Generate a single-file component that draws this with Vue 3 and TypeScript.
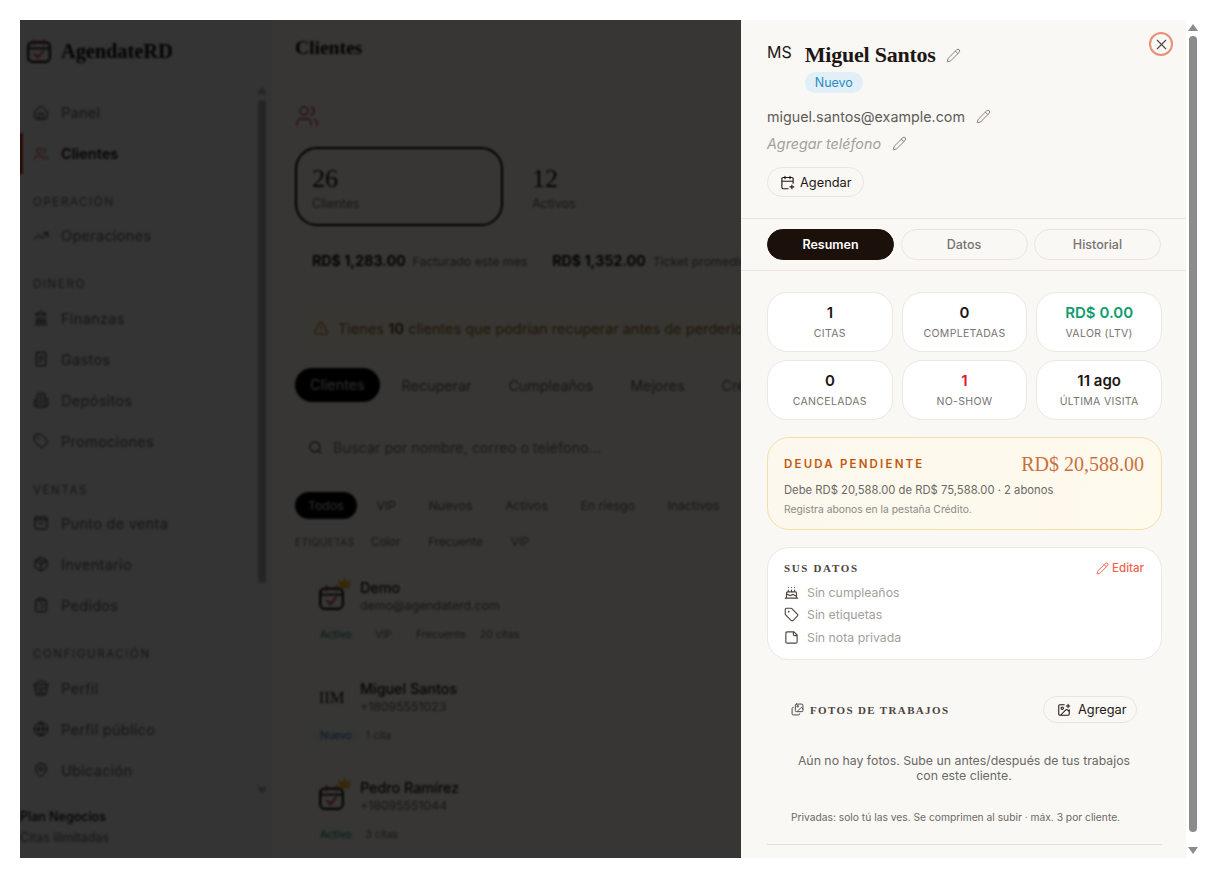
<script setup lang="ts">
  // iconos dibujados a mano, un solo path por icono
  const ICONS: Record<string, string> = {
    house: 'M15 21v-8a1 1 0 0 0-1-1h-4a1 1 0 0 0-1 1v8M3 10a2 2 0 0 1 .709-1.528l7-5.999a2 2 0 0 1 2.582 0l7 5.999A2 2 0 0 1 21 10v9a2 2 0 0 1-2 2H5a2 2 0 0 1-2-2z',
    users: 'M16 21v-2a4 4 0 0 0-4-4H6a4 4 0 0 0-4 4v2M5 7a4 4 0 1 0 8 0a4 4 0 1 0-8 0M22 21v-2a4 4 0 0 0-3-3.87M16 3.13a4 4 0 0 1 0 7.75',
    trend: 'M22 7l-8.5 8.5-5-5L2 17M16 7h6v6',
    bank: 'M3 22h18M6 18v-7M10 18v-7M14 18v-7M18 18v-7M12 2l8 5H4zM4 18h16',
    receipt: 'M6 2h12a1 1 0 0 1 1 1v18a1 1 0 0 1-1 1H6a1 1 0 0 1-1-1V3a1 1 0 0 1 1-1zM9 8h6M9 12h6M9 16h3',
    building: 'M6 22V4a2 2 0 0 1 2-2h8a2 2 0 0 1 2 2v18ZM6 12H4a2 2 0 0 0-2 2v6a2 2 0 0 0 2 2h2M18 9h2a2 2 0 0 1 2 2v9a2 2 0 0 1-2 2h-2M10 6h4M10 10h4M10 14h4M10 18h4',
    tag: 'M12.586 2.586A2 2 0 0 0 11.172 2H4a2 2 0 0 0-2 2v7.172a2 2 0 0 0 .586 1.414l8.704 8.704a2.426 2.426 0 0 0 3.42 0l6.58-6.58a2.426 2.426 0 0 0 0-3.42zM7 7.5a.5.5 0 1 0 1 0a.5.5 0 1 0-1 0',
    bag: 'M5 3h14a2 2 0 0 1 2 2v14a2 2 0 0 1-2 2H5a2 2 0 0 1-2-2V5a2 2 0 0 1 2-2zM3 7h18M8.5 11l3.5 3 3.5-3',
    box: 'M7.5 4.27l9 5.15M21 8a2 2 0 0 0-1-1.73l-7-4a2 2 0 0 0-2 0l-7 4A2 2 0 0 0 3 8v8a2 2 0 0 0 1 1.73l7 4a2 2 0 0 0 2 0l7-4A2 2 0 0 0 21 16ZM3.3 7l8.7 5 8.7-5M12 22V12',
    clipboard: 'M9 2h6a1 1 0 0 1 1 1v2a1 1 0 0 1-1 1H9a1 1 0 0 1-1-1V3a1 1 0 0 1 1-1zM16 4h2a2 2 0 0 1 2 2v14a2 2 0 0 1-2 2H6a2 2 0 0 1-2-2V6a2 2 0 0 1 2-2h2M12 11h4M12 16h4M8 11h.01M8 16h.01',
    store: 'M2 7l4.41-4.41A2 2 0 0 1 7.83 2h8.34a2 2 0 0 1 1.42.59L22 7M4 12v8a2 2 0 0 0 2 2h12a2 2 0 0 0 2-2v-8M15 22v-4a2 2 0 0 0-2-2h-2a2 2 0 0 0-2 2v4M2 7h20M22 7v3a2 2 0 0 1-2 2a2.7 2.7 0 0 1-2-1a2.7 2.7 0 0 1-4 1a2.7 2.7 0 0 1-4 0a2.7 2.7 0 0 1-4-1a2.7 2.7 0 0 1-2 1a2 2 0 0 1-2-2V7',
    globe: 'M2 12a10 10 0 1 0 20 0a10 10 0 1 0-20 0M12 2a14.5 14.5 0 0 0 0 20 14.5 14.5 0 0 0 0-20M2 12h20',
    pin: 'M20 10c0 4.993-5.539 10.193-7.399 11.799a1 1 0 0 1-1.202 0C9.539 20.193 4 14.993 4 10a8 8 0 0 1 16 0M9 10a3 3 0 1 0 6 0a3 3 0 1 0-6 0',
    search: 'M3 11a8 8 0 1 0 16 0a8 8 0 1 0-16 0M21 21l-4.3-4.3',
    alert: 'M21.73 18l-8-14a2 2 0 0 0-3.48 0l-8 14A2 2 0 0 0 4 21h16a2 2 0 0 0 1.73-3M12 9v4M12 17h.01',
    pencil: 'M21.174 6.812a1 1 0 0 0-3.986-3.987L3.842 16.174a2 2 0 0 0-.5.83l-1.321 4.352a.5.5 0 0 0 .623.622l4.353-1.32a2 2 0 0 0 .83-.497zM15 5l4 4',
    close: 'M18 6L6 18M6 6l12 12',
    calPlus: 'M16 2v4M8 2v4M21 13V6a2 2 0 0 0-2-2H5a2 2 0 0 0-2 2v14a2 2 0 0 0 2 2h8M3 10h18M16 19h6M19 16v6',
    cake: 'M20 21v-8a2 2 0 0 0-2-2H6a2 2 0 0 0-2 2v8M4 16s.5-1 2-1 2.5 2 4 2 2.5-2 4-2 2.5 2 4 2 2-1 2-1M2 21h20M7 8v3M12 8v3M17 8v3M7 4h.01M12 4h.01M17 4h.01',
    note: 'M16 3H5a2 2 0 0 0-2 2v14a2 2 0 0 0 2 2h14a2 2 0 0 0 2-2V8ZM15 3v4a2 2 0 0 0 2 2h4',
    images: 'M10 2h10a2 2 0 0 1 2 2v10a2 2 0 0 1-2 2H10a2 2 0 0 1-2-2V4a2 2 0 0 1 2-2zM4 8a2 2 0 0 0-2 2v10a2 2 0 0 0 2 2h10a2 2 0 0 0 2-2M22 11l-3-3-6 6M11 6a1.5 1.5 0 1 0 3 0a1.5 1.5 0 1 0-3 0',
    imagePlus: 'M16 5h6M19 2v6M21 11.5V19a2 2 0 0 1-2 2H5a2 2 0 0 1-2-2V5a2 2 0 0 1 2-2h7.5M21 15l-3.086-3.086a2 2 0 0 0-2.828 0L6 21M7 9a2 2 0 1 0 4 0a2 2 0 1 0-4 0',
  }

  interface NavGroup {
    label?: string
    items: { icon: string; text: string; active?: boolean }[]
  }

  const navGroups: NavGroup[] = [
    { items: [{ icon: 'house', text: 'Panel' }, { icon: 'users', text: 'Clientes', active: true }] },
    { label: 'OPERACIÓN', items: [{ icon: 'trend', text: 'Operaciones' }] },
    {
      label: 'DINERO',
      items: [
        { icon: 'bank', text: 'Finanzas' },
        { icon: 'receipt', text: 'Gastos' },
        { icon: 'building', text: 'Depósitos' },
        { icon: 'tag', text: 'Promociones' },
      ],
    },
    {
      label: 'VENTAS',
      items: [
        { icon: 'bag', text: 'Punto de venta' },
        { icon: 'box', text: 'Inventario' },
        { icon: 'clipboard', text: 'Pedidos' },
      ],
    },
    {
      label: 'CONFIGURACIÓN',
      items: [
        { icon: 'store', text: 'Perfil' },
        { icon: 'globe', text: 'Perfil público' },
        { icon: 'pin', text: 'Ubicación' },
      ],
    },
  ]

  const tabs = ['Recuperar', 'Cumpleaños', 'Mejores', 'Crédito']
  const chips = ['VIP', 'Nuevos', 'Activos', 'En riesgo', 'Inactivos']
  const tagFilters = ['Color', 'Frecuente', 'VIP']

  const clients = [
    { name: 'Demo', sub: 'demo@agendaterd.com', logo: true, status: 'Activo', tone: 'green', tags: ['VIP', 'Frecuente'], count: '20 citas' },
    { name: 'Miguel Santos', sub: '+18095551023', logo: false, status: 'Nuevo', tone: 'blue', tags: [], count: '1 cita' },
    { name: 'Pedro Ramírez', sub: '+18095551044', logo: true, status: 'Activo', tone: 'green', tags: [], count: '3 citas' },
  ]

  const stats = [
    { value: '1', label: 'Citas', tone: '' },
    { value: '0', label: 'Completadas', tone: '' },
    { value: 'RD$ 0.00', label: 'Valor (LTV)', tone: 'green' },
    { value: '0', label: 'Canceladas', tone: '' },
    { value: '1', label: 'No-show', tone: 'red' },
    { value: '11 ago', label: 'Última visita', tone: '' },
  ]

  const detailTabs = ['Resumen', 'Datos', 'Historial']

  const dataRows = [
    { icon: 'cake', text: 'Sin cumpleaños' },
    { icon: 'tag', text: 'Sin etiquetas' },
    { icon: 'note', text: 'Sin nota privada' },
  ]
</script>

<template>
  <div class="page">
    <div class="frame">
      <aside class="sidebar">
        <div class="brand">
          <svg class="logo" viewBox="0 0 24 24" fill="none" stroke-linecap="round" stroke-linejoin="round">
            <rect x="2" y="4" width="20" height="18" rx="4" stroke="#111" stroke-width="2" />
            <path d="M2.5 9.5h19" stroke="#111" stroke-width="1.6" />
            <path d="M7.5 2v4M16.5 2v4" stroke="#c0392b" stroke-width="1.6" />
            <path d="M8 15l3 3 5-6" stroke="#c0392b" stroke-width="1.8" />
          </svg>
          <span class="brand-name">AgendateRD</span>
        </div>
        <div class="side-scroll">
          <nav class="nav">
            <template v-for="group in navGroups" :key="group.label ?? 'top'">
              <div v-if="group.label" class="nav-label">{{ group.label }}</div>
              <a
                v-for="item in group.items"
                :key="item.text"
                class="nav-item"
                :class="{ active: item.active }"
              >
                <svg class="ico nav-ico" viewBox="0 0 24 24"><path :d="ICONS[item.icon]" /></svg>
                <span>{{ item.text }}</span>
              </a>
            </template>
          </nav>
          <div class="side-bar">
            <i class="arrow up" />
            <i class="thumb" />
            <i class="arrow down" />
          </div>
        </div>
        <div class="plan">
          <strong>Plan Negocios</strong>
          <span>Citas ilimitadas</span>
        </div>
      </aside>

      <main class="main">
        <h1 class="title">Clientes</h1>
        <svg class="ico head-ico" viewBox="0 0 24 24"><path :d="ICONS.users" /></svg>
        <div class="cards">
          <div class="card selected">
            <b>26</b>
            <span>Clientes</span>
          </div>
          <div class="card">
            <b>12</b>
            <span>Activos</span>
          </div>
        </div>
        <div class="kpis">
          <strong>RD$ 1,283.00</strong><span>Facturado este mes</span>
          <strong class="kpi-second">RD$ 1,352.00</strong><span>Ticket promedio</span>
        </div>
        <div class="warn">
          <svg class="ico warn-ico" viewBox="0 0 24 24"><path :d="ICONS.alert" /></svg>
          <span>Tienes <b>10</b> clientes que podrían recuperar antes de perderlos</span>
        </div>
        <div class="tabs">
          <span class="tab on">Clientes</span>
          <span v-for="tab in tabs" :key="tab" class="tab">{{ tab }}</span>
        </div>
        <div class="search">
          <svg class="ico search-ico" viewBox="0 0 24 24"><path :d="ICONS.search" /></svg>
          <span>Buscar por nombre, correo o teléfono...</span>
        </div>
        <div class="chips">
          <span class="chip on">Todos</span>
          <span v-for="chip in chips" :key="chip" class="chip">{{ chip }}</span>
        </div>
        <div class="tag-filters">
          <span class="tag-label">ETIQUETAS</span>
          <span v-for="tag in tagFilters" :key="tag" class="tag-filter">{{ tag }}</span>
        </div>
        <div class="clients">
          <div v-for="client in clients" :key="client.name" class="client">
            <div class="client-top">
              <div class="client-avatar">
                <template v-if="client.logo">
                  <svg class="avatar-logo" viewBox="0 0 24 24" fill="none" stroke-linecap="round" stroke-linejoin="round">
                    <rect x="2" y="4" width="20" height="18" rx="4" stroke="#111" stroke-width="2" />
                    <path d="M2.5 9.5h19" stroke="#111" stroke-width="1.6" />
                    <path d="M7.5 2v4M16.5 2v4" stroke="#c0392b" stroke-width="1.6" />
                    <path d="M8 15l3 3 5-6" stroke="#c0392b" stroke-width="1.8" />
                  </svg>
                  <svg class="crown" viewBox="0 0 24 24"><path d="M2 6l6 6 4-9 4 9 6-6-2 15H4z" fill="#f0b429" /></svg>
                </template>
                <span v-else class="initials">IIM</span>
              </div>
              <div class="client-info">
                <div class="client-name">{{ client.name }}</div>
                <div class="client-sub">{{ client.sub }}</div>
              </div>
            </div>
            <div class="client-tags">
              <span class="status" :class="client.tone">{{ client.status }}</span>
              <span v-for="tag in client.tags" :key="tag" class="client-tag">{{ tag }}</span>
              <span class="client-count">{{ client.count }}</span>
            </div>
          </div>
        </div>
      </main>

      <div class="overlay" />

      <section class="drawer">
        <button class="close-btn" type="button" aria-label="Cerrar">
          <svg class="ico" viewBox="0 0 24 24"><path :d="ICONS.close" /></svg>
        </button>

        <header class="head">
          <div class="head-name">
            <span class="ms">MS</span>
            <div>
              <div class="name-row">
                <h2>Miguel Santos</h2>
                <svg class="ico pen" viewBox="0 0 24 24"><path :d="ICONS.pencil" /></svg>
              </div>
              <span class="badge">Nuevo</span>
            </div>
          </div>
          <div class="contact">
            <span>miguel.santos@example.com</span>
            <svg class="ico pen" viewBox="0 0 24 24"><path :d="ICONS.pencil" /></svg>
          </div>
          <div class="contact empty">
            <span>Agregar teléfono</span>
            <svg class="ico pen" viewBox="0 0 24 24"><path :d="ICONS.pencil" /></svg>
          </div>
          <button class="agendar" type="button">
            <svg class="ico" viewBox="0 0 24 24"><path :d="ICONS.calPlus" /></svg>
            Agendar
          </button>
        </header>

        <div class="detail-tabs">
          <span
            v-for="(tab, i) in detailTabs"
            :key="tab"
            class="detail-tab"
            :class="{ on: i === 0 }"
          >{{ tab }}</span>
        </div>

        <div class="body">
          <div class="stats">
            <div v-for="stat in stats" :key="stat.label" class="stat">
              <b :class="stat.tone">{{ stat.value }}</b>
              <span>{{ stat.label }}</span>
            </div>
          </div>

          <div class="debt">
            <div class="debt-top">
              <span class="debt-label">DEUDA PENDIENTE</span>
              <span class="debt-amount">RD$ 20,588.00</span>
            </div>
            <p class="debt-line">Debe RD$ 20,588.00 de RD$ 75,588.00 · 2 abonos</p>
            <p class="debt-hint">Registra abonos en la pestaña Crédito.</p>
          </div>

          <div class="data-card">
            <div class="data-head">
              <span class="serif-label">SUS DATOS</span>
              <span class="edit">
                <svg class="ico" viewBox="0 0 24 24"><path :d="ICONS.pencil" /></svg>
                Editar
              </span>
            </div>
            <div v-for="row in dataRows" :key="row.text" class="data-row">
              <svg class="ico" viewBox="0 0 24 24"><path :d="ICONS[row.icon]" /></svg>
              <span>{{ row.text }}</span>
            </div>
          </div>

          <div class="photos">
            <div class="photos-head">
              <span class="photos-title">
                <svg class="ico" viewBox="0 0 24 24"><path :d="ICONS.images" /></svg>
                <span class="serif-label wide">FOTOS DE TRABAJOS</span>
              </span>
              <button class="add" type="button">
                <svg class="ico" viewBox="0 0 24 24"><path :d="ICONS.imagePlus" /></svg>
                Agregar
              </button>
            </div>
            <p class="photos-empty">Aún no hay fotos. Sube un antes/después de tus trabajos con este cliente.</p>
            <p class="photos-note">Privadas: solo tú las ves. Se comprimen al subir · máx. 3 por cliente.</p>
          </div>
          <div class="end-line" />
        </div>
      </section>
    </div>

    <div class="page-bar">
      <i class="arrow up" />
      <i class="thumb" />
      <i class="arrow down" />
    </div>
  </div>
</template>

<style>
html, body {
  background: #fff;
  overflow: hidden;
}
</style>

<style scoped>
.page {
  display: flex;
  height: 878px;
  padding: 20px 0 20px 20px;
  box-sizing: border-box;
  font-family: Inter, "Noto Sans", sans-serif;
  background: #fff;
  color: #1c1714;
}

.frame {
  position: relative;
  display: flex;
  width: 1166px;
  height: 838px;
  overflow: hidden;
  background: #fff;
}

.ico {
  fill: none;
  stroke: currentColor;
  stroke-width: 1.8;
  stroke-linecap: round;
  stroke-linejoin: round;
  flex: none;
}

/* barra lateral */
.sidebar {
  display: flex;
  flex-direction: column;
  flex: none;
  width: 252px;
  background: #eceaea;
}

.brand {
  display: flex;
  align-items: center;
  gap: 9px;
  height: 62px;
  padding-left: 6px;
  box-sizing: border-box;
}

.logo {
  width: 26px;
  height: 26px;
}

.brand-name {
  font: 700 20.3px "Liberation Serif", serif;
  color: #120f0d;
}

.side-scroll {
  display: flex;
  height: 718px;
  flex: none;
}

.nav {
  flex: 1;
  padding-top: 10px;
}

.nav-label {
  box-sizing: border-box;
  height: 41px;
  padding: 21px 0 0 13px;
  font-size: 11.5px;
  line-height: 14px;
  letter-spacing: 0.14em;
  color: #6d6a67;
}

.nav-label:nth-of-type(2) {
  height: 41.5px;
}

.nav-label:nth-of-type(4) {
  height: 42px;
}

.nav-item {
  display: flex;
  align-items: center;
  gap: 12px;
  height: 41px;
  width: 220px;
  padding-left: 13px;
  box-sizing: border-box;
  font-size: 14.5px;
  letter-spacing: 0.02em;
  color: #6b6865;
}

.nav-item.active {
  border-left: 3px solid #b93a24;
  padding-left: 10px;
  font-weight: 600;
  letter-spacing: 0;
  color: #1c1714;
  background: #efeeee;
}

.nav-item.active .nav-ico {
  color: #b93a24;
}

.nav-ico {
  width: 16px;
  height: 16px;
  stroke-width: 1.5;
  color: #1c1714;
}

.side-bar {
  display: flex;
  flex-direction: column;
  align-items: center;
  width: 14px;
  margin-right: 3px;
  padding-top: 5px;
  --bar: #a8a8a8;
}

.side-bar .thumb {
  height: 483px;
  margin-top: 6px;
  margin-bottom: 204px;
}

.page-bar {
  display: flex;
  flex-direction: column;
  align-items: center;
  width: 14px;
  padding-top: 4px;
  --bar: #8b8b8b;
}

.page-bar .thumb {
  height: 796px;
  margin-top: 5px;
  margin-bottom: 15px;
}

.thumb {
  display: block;
  flex: none;
  width: 8px;
  border-radius: 4px;
  background: var(--bar);
}

.arrow {
  display: block;
  flex: none;
  width: 0;
  height: 0;
  border-left: 5px solid transparent;
  border-right: 5px solid transparent;
}

.arrow.up {
  border-bottom: 7px solid var(--bar);
}

.arrow.down {
  border-top: 7px solid var(--bar);
}

.plan {
  display: flex;
  flex-direction: column;
  gap: 6px;
  padding-top: 9px;
  font-size: 12.5px;
  line-height: 15px;
  color: #6b6865;
}

.plan strong {
  font-weight: 500;
  color: #1c1714;
}

/* contenido detrás del panel */
.main {
  flex: 1;
  min-width: 0;
  padding-left: 23px;
  overflow: hidden;
  background: #fbf6f1;
}

.title {
  margin: 0;
  height: 62px;
  padding-top: 16px;
  box-sizing: border-box;
  font: 700 19.5px/24px "Liberation Serif", serif;
  color: #120f0d;
}

.head-ico {
  display: block;
  width: 24px;
  height: 24px;
  margin-top: 22px;
  color: #c0392b;
  stroke-width: 1.4;
}

.cards {
  display: flex;
  gap: 12px;
  margin-top: 19px;
}

.card {
  display: flex;
  flex-direction: column;
  flex: none;
  width: 208px;
  height: 79px;
  padding: 14px 15px;
  box-sizing: border-box;
  border: 2px solid transparent;
  border-radius: 22px;
}

.card.selected {
  border-color: #000;
}

.card b {
  font: 400 26px/32px "Liberation Serif", serif;
  color: #15110f;
}

.card span {
  margin-top: 1px;
  font-size: 12.5px;
  color: #6b6865;
}

.kpis {
  display: flex;
  align-items: baseline;
  margin-top: 26px;
  padding-left: 17px;
  font-size: 12.3px;
  white-space: nowrap;
  color: #6b6865;
  height: 20px;
}

.kpis strong {
  margin-right: 7px;
  font-size: 14.2px;
  font-weight: 700;
  color: #1c1714;
}

.kpis .kpi-second {
  margin-left: 25px;
}

.warn {
  display: flex;
  align-items: center;
  gap: 9px;
  margin-top: 33px;
  height: 46px;
  padding-left: 18px;
  border-radius: 16px;
  background: #fff6e5;
  font-size: 14.5px;
  white-space: nowrap;
  color: #8a6a1f;
}

.warn b {
  font-weight: 700;
  color: #6b4e10;
}

.warn-ico {
  width: 16px;
  height: 16px;
  color: #a8761b;
}

.tabs {
  display: flex;
  align-items: center;
  gap: 7px;
  margin-top: 17px;
  white-space: nowrap;
}

.tab {
  padding: 0 15px;
  font-size: 14.3px;
  color: #6b6865;
}

.tab.on {
  height: 34px;
  border-radius: 17px;
  background: #000;
  color: #c9c9c9;
  line-height: 34px;
}

.search {
  display: flex;
  align-items: center;
  gap: 10px;
  height: 44px;
  margin-top: 23px;
  padding-left: 13px;
  font-size: 14.4px;
  color: #7c7976;
}

.search-ico {
  width: 15px;
  height: 15px;
  color: #2b2724;
}

.chips {
  display: flex;
  align-items: center;
  gap: 6.5px;
  margin-top: 23px;
  white-space: nowrap;
}

.chip {
  padding: 0 13px;
  font-size: 12.3px;
  color: #6b6865;
}

.chip.on {
  height: 27px;
  border-radius: 14px;
  background: #000;
  color: #c9c9c9;
  line-height: 27px;
}

.tag-filters {
  display: flex;
  align-items: center;
  margin-top: 15px;
  height: 16px;
  font-size: 11.5px;
  color: #6b6865;
  gap: 28px;
}

.tag-label {
  width: 48px;
  font-size: 10px;
  letter-spacing: 0.05em;
}

.clients {
  margin-top: 26px;
}

.client {
  height: 99px;
  padding-left: 15px;
  box-sizing: border-box;
}

.client:first-child {
  height: 101px;
}

.client-top {
  display: flex;
  align-items: center;
  gap: 15px;
  height: 42px;
  padding-left: 8px;
}

.client-avatar {
  position: relative;
  display: flex;
  align-items: center;
  justify-content: center;
  width: 27px;
  height: 27px;
  flex: none;
}

.avatar-logo {
  width: 27px;
  height: 27px;
}

.crown {
  position: absolute;
  top: -9px;
  right: -7px;
  width: 15px;
  height: 15px;
}

.initials {
  font: 400 16.5px "Liberation Serif", serif;
  color: #1c1714;
}

.client-name {
  font-size: 14.3px;
  line-height: 18px;
  font-weight: 500;
  color: #1c1714;
}

.client-sub {
  font-size: 12.3px;
  line-height: 18px;
  color: #6b6865;
}

.client-tags {
  display: flex;
  align-items: center;
  gap: 4px;
  margin-top: 9px;
  font-size: 10.5px;
  line-height: 16px;
  color: #6b6865;
}

.client-tag,
.status {
  padding: 0 10px;
  border-radius: 8px;
}

.status.green {
  background: #f0f6f1;
  color: #17724f;
}

.status.blue {
  background: #eef4f6;
  color: #1f6f9e;
}

/* panel de detalle */
.overlay {
  position: absolute;
  inset: 0;
  background: rgba(0, 0, 0, 0.78);
  backdrop-filter: blur(0.8px);
}

.drawer {
  position: absolute;
  top: 0;
  right: 0;
  bottom: 0;
  width: 445px;
  background: #faf8f5;
}

.close-btn {
  position: absolute;
  top: 12px;
  right: 13px;
  display: flex;
  align-items: center;
  justify-content: center;
  width: 24px;
  height: 24px;
  padding: 0;
  border: 2px solid #ea8f76;
  border-radius: 50%;
  background: transparent;
  color: #4a4643;
}

.close-btn .ico {
  width: 17px;
  height: 17px;
  stroke-width: 1.6;
}

.head {
  height: 199px;
  padding: 22px 26px 0;
  box-sizing: border-box;
  border-bottom: 1px solid #e9e6e1;
}

.head-name {
  display: flex;
  gap: 13px;
}

.ms {
  font-size: 16px;
  line-height: 20px;
  color: #1c1714;
}

.name-row {
  display: flex;
  align-items: center;
  gap: 10px;
  height: 26px;
}

.name-row h2 {
  margin: 0;
  font: 700 22px/26px "Liberation Serif", serif;
  letter-spacing: -0.01em;
  color: #1c1714;
}

.pen {
  width: 15px;
  height: 15px;
  color: #84817d;
  stroke-width: 1.6;
}

.badge {
  display: inline-block;
  margin-top: 4px;
  padding: 0 10px;
  height: 21px;
  border-radius: 11px;
  background: #e0f0f6;
  font-size: 12.5px;
  line-height: 21px;
  color: #2b8cc4;
}

.contact {
  display: flex;
  align-items: center;
  gap: 11px;
  height: 20px;
  margin-top: 13px;
  font-size: 14.3px;
  color: #5f5b57;
}

.contact.empty {
  margin-top: 7px;
  font-style: italic;
  color: #a3a09c;
}

.agendar {
  display: flex;
  align-items: center;
  gap: 5px;
  height: 30px;
  margin-top: 14px;
  padding: 0 11px 0 12px;
  border: 1px solid #e9e6e1;
  border-radius: 16px;
  background: transparent;
  font: 400 12.8px Inter, sans-serif;
  color: #1c1714;
}

.agendar .ico {
  width: 15px;
  height: 15px;
}

.detail-tabs {
  display: flex;
  justify-content: space-between;
  align-items: center;
  height: 52px;
  padding: 0 25px 0 26px;
  box-sizing: border-box;
  border-bottom: 1px solid #e9e6e1;
}

.detail-tab {
  display: flex;
  align-items: center;
  justify-content: center;
  width: 127px;
  height: 31px;
  box-sizing: border-box;
  border: 1px solid #e9e6e1;
  border-radius: 16px;
  font-size: 12.5px;
  font-weight: 500;
  color: #77736f;
}

.detail-tab.on {
  border-color: #1c100b;
  background: #1c100b;
  font-weight: 600;
  color: #fff;
}

.body {
  padding: 21px 24px 0 26px;
}

.stats {
  display: grid;
  grid-template-columns: repeat(3, 1fr);
  gap: 8px 9px;
}

.stat {
  display: flex;
  flex-direction: column;
  align-items: center;
  height: 60px;
  padding-top: 11px;
  box-sizing: border-box;
  border: 1px solid #ebe8e4;
  border-radius: 20px;
  background: #fff;
}

.stat b {
  font-size: 15px;
  line-height: 18px;
  font-weight: 600;
  color: #1c1714;
}

.stat b.green {
  color: #0f9d6e;
}

.stat b.red {
  color: #e0142f;
}

.stat span {
  margin-top: 5px;
  font-size: 10.5px;
  line-height: 14px;
  letter-spacing: 0.03em;
  text-transform: uppercase;
  color: #77736f;
}

.debt {
  height: 93px;
  margin-top: 17px;
  padding: 15px 17px 0 16px;
  box-sizing: border-box;
  border: 1px solid #f5dfa8;
  border-radius: 22px;
  background: linear-gradient(100deg, #fcf8ee, #fffaec);
}

.debt-top {
  display: flex;
  align-items: center;
  justify-content: space-between;
  height: 22px;
}

.debt-label {
  font-size: 11.5px;
  font-weight: 600;
  letter-spacing: 0.19em;
  color: #c2570c;
}

.debt-amount {
  font: 400 20px "Liberation Serif", serif;
  color: #c9703f;
}

.debt-line {
  margin: 7px 0 0;
  font-size: 11.25px;
  line-height: 16px;
  color: #6b6865;
}

.debt-hint {
  margin: 4px 0 0;
  font-size: 10.3px;
  line-height: 14px;
  color: #8c8985;
}

.data-card {
  height: 113px;
  margin-top: 17px;
  padding: 12px 17px 0 16px;
  box-sizing: border-box;
  border: 1px solid #ebe8e4;
  border-radius: 22px;
  background: #fff;
}

.data-head {
  display: flex;
  align-items: center;
  justify-content: space-between;
  height: 16px;
  margin-bottom: 5px;
}

.serif-label {
  font: 700 11px "Liberation Serif", serif;
  letter-spacing: 0.15em;
  color: #4c453f;
}

.serif-label.wide {
  letter-spacing: 0.123em;
}

.edit {
  display: flex;
  align-items: center;
  gap: 3px;
  font-size: 11.5px;
  font-weight: 500;
  color: #ef5f4b;
}

.edit .ico {
  width: 13px;
  height: 13px;
}

.data-row {
  display: flex;
  align-items: center;
  gap: 8px;
  height: 22.5px;
  font-size: 12.3px;
  color: #a3a09c;
}

.data-row .ico {
  width: 15px;
  height: 15px;
  color: #4c453f;
}

.photos {
  padding: 0 25px 0 24px;
}

.photos-head {
  display: flex;
  align-items: center;
  justify-content: space-between;
  height: 27px;
  margin-top: 36px;
}

.photos-title {
  display: flex;
  align-items: center;
  gap: 6px;
}

.photos-title .ico {
  width: 13px;
  height: 13px;
  color: #4c453f;
}

.add {
  display: flex;
  align-items: center;
  gap: 7px;
  width: 94px;
  height: 27px;
  padding: 0 0 0 13px;
  box-sizing: border-box;
  border: 1px solid #e9e6e1;
  border-radius: 14px;
  background: transparent;
  font: 400 12.8px Inter, sans-serif;
  color: #1c1714;
}

.add .ico {
  width: 14px;
  height: 14px;
}

.photos-empty {
  margin: 30px 0 0;
  padding: 0 2px;
  font-size: 12.3px;
  line-height: 15px;
  text-align: center;
  color: #6b6865;
}

.photos-note {
  margin: 27px 0 0;
  font-size: 10.25px;
  line-height: 14px;
  white-space: nowrap;
  color: #6b6865;
}

.end-line {
  height: 1px;
  margin-top: 20px;
  background: #e3e0db;
}
</style>
